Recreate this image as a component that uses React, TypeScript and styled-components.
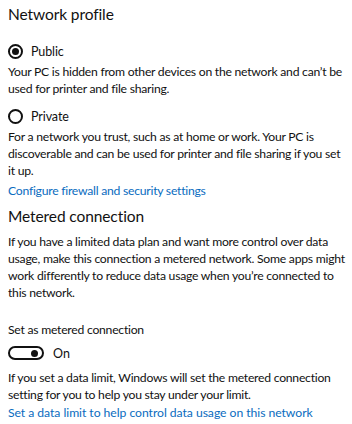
import React from "react";
import styled, { createGlobalStyle } from "styled-components";

const Global = createGlobalStyle`
  html, body { margin: 0; padding: 0; background: #ffffff; }
  body { font-family: "Segoe UI", Lato, "Open Sans", sans-serif; color: #111; }
`;

const Page = styled.div`
  display: flex;
  flex-direction: column;
  padding: 2px 8px 0 8px;
  width: 352px;
  box-sizing: border-box;
`;

const Heading = styled.h2<{ $mt?: number }>`
  margin: ${(p) => p.$mt ?? 0}px 0 0 0;
  font-size: 15.5px;
  font-weight: 400;
  line-height: 24px;
  letter-spacing: -0.1px;
  color: #111;
`;

const Text = styled.p<{ $mt?: number }>`
  margin: ${(p) => p.$mt ?? 0}px 0 0 0;
  font-size: 12.2px;
  line-height: 17px;
  letter-spacing: -0.25px;
  white-space: nowrap;
  color: #111;
`;

const Link = styled.a<{ $mt?: number; $spacing?: number }>`
  display: block;
  margin-top: ${(p) => p.$mt ?? 0}px;
  font-size: 12.2px;
  line-height: 17px;
  letter-spacing: ${(p) => p.$spacing ?? -0.25}px;
  white-space: nowrap;
  color: #0a6cc0;
  text-decoration: none;
`;

const RadioRow = styled.label<{ $mt?: number }>`
  display: flex;
  align-items: center;
  gap: 8px;
  height: 20px;
  margin-top: ${(p) => p.$mt ?? 0}px;
  font-size: 12.5px;
  letter-spacing: -0.1px;
`;

const RadioCircle = styled.span<{ $checked?: boolean }>`
  width: 15px;
  height: 15px;
  box-sizing: border-box;
  border: 2px solid #111;
  border-radius: 50%;
  display: flex;
  align-items: center;
  justify-content: center;
  &::after {
    content: "";
    width: 7px;
    height: 7px;
    border-radius: 50%;
    background: #111;
    display: ${(p) => (p.$checked ? "block" : "none")};
  }
`;

const ToggleRow = styled.div<{ $mt?: number }>`
  display: flex;
  align-items: center;
  gap: 9px;
  height: 20px;
  margin-top: ${(p) => p.$mt ?? 0}px;
  font-size: 12.5px;
`;

const Toggle = styled.span`
  width: 36px;
  height: 14px;
  box-sizing: border-box;
  border: 2px solid #111;
  border-radius: 7px;
  display: flex;
  align-items: center;
  justify-content: flex-end;
  padding-right: 4px;
  &::after {
    content: "";
    width: 7px;
    height: 7px;
    border-radius: 50%;
    background: #111;
  }
`;

export default function App() {
  return (
    <>
      <Global />
      <Page>
        <Heading>Network profile</Heading>
        <RadioRow $mt={15}>
          <RadioCircle $checked />
          Public
        </RadioRow>
        <Text $mt={1.5}>
          Your PC is hidden from other devices on the network and can’t be
          <br />
          used for printer and file sharing.
        </Text>
        <RadioRow $mt={9.5}>
          <RadioCircle />
          Private
        </RadioRow>
        <Text $mt={1.5}>
          For a network you trust, such as at home or work. Your PC is
          <br />
          discoverable and can be used for printer and file sharing if you set
          <br />
          it up.
        </Text>
        <Link $mt={3}>Configure firewall and security settings</Link>
        <Heading $mt={5.5}>Metered connection</Heading>
        <Text $mt={4.5}>
          If you have a limited data plan and want more control over data
          <br />
          usage, make this connection a metered network. Some apps might
          <br />
          work differently to reduce data usage when you’re connected to
          <br />
          this network.
        </Text>
        <Text $mt={20}>Set as metered connection</Text>
        <ToggleRow $mt={5.5}>
          <Toggle />
          On
        </ToggleRow>
        <Text $mt={5.5}>
          If you set a data limit, Windows will set the metered connection
          <br />
          setting for you to help you stay under your limit.
        </Text>
        <Link $mt={1} $spacing={-0.05}>
          Set a data limit to help control data usage on this network
        </Link>
      </Page>
    </>
  );
}
